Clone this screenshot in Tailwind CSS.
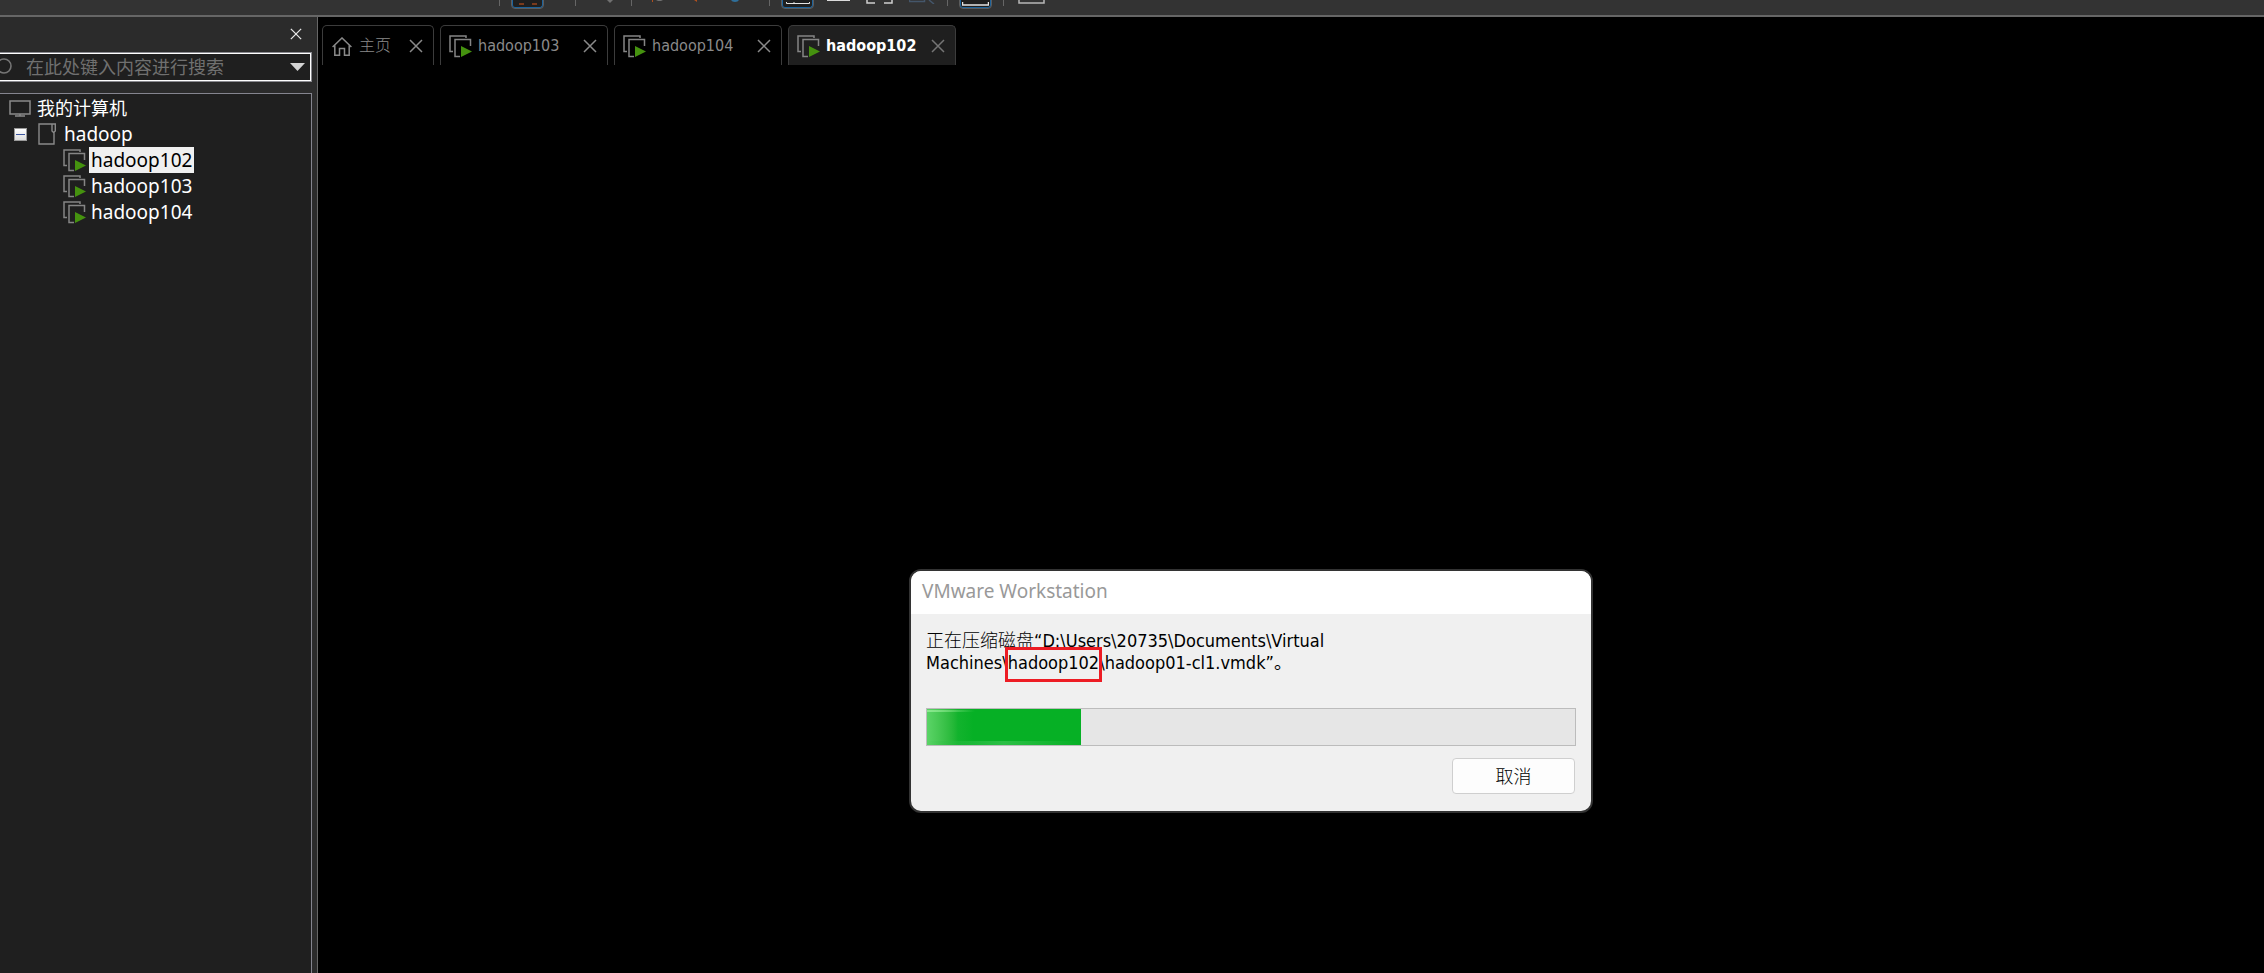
<!DOCTYPE html>
<html lang="zh-Hans">
<head>
  <meta charset="UTF-8" />
  <meta name="viewport" content="width=device-width, initial-scale=1.0" />
  <title>hadoop102 - VMware Workstation</title>
  <script src="https://cdn.jsdelivr.net/npm/@tailwindcss/browser@4"></script>
</head>
<body class="flex h-screen flex-col overflow-hidden bg-black font-['Noto_Sans','Noto_Sans_CJK_SC',sans-serif] text-white">

  <!-- 共用圖示 -->
  <svg class="hidden" xmlns="http://www.w3.org/2000/svg">
    <symbol id="icon-vm" viewBox="0 0 23 23">
      <path d="M4 16.5H1V1H17V3" fill="none" stroke="#858585" stroke-width="1.5" />
      <path d="M11 21.5H6V4.5H21.5V11" fill="none" stroke="#858585" stroke-width="1.5" />
      <path d="M12 11L23 16.5L12 22Z" fill="#45920f" />
    </symbol>
    <symbol id="icon-close" viewBox="0 0 14 14">
      <path d="M1 1L13 13M13 1L1 13" fill="none" stroke="currentColor" stroke-width="1.5" />
    </symbol>
  </svg>

  <!-- 工具列 -->
  <header class="flex h-[17px] shrink-0 items-start overflow-hidden border-b-2 border-[#666] bg-[#333] pl-[499px]">
    <span class="h-[6px] w-px bg-[#666]"></span>
    <button class="ml-[12px] h-[8px] w-[31px] rounded-b-[3px] border border-t-0 border-[#1c639c] bg-[#1f1f1f] outline outline-[#5c5c5c]" aria-label="挂起">
      <svg class="mx-auto block h-[2px] w-[18px]" viewBox="0 0 18 2"><path d="M0 0H5V2H0ZM13 0H18V2H13Z" fill="#7a3a1c" /></svg>
    </button>
    <span class="ml-[32px] h-[6px] w-px bg-[#666]"></span>
    <button class="ml-[31px] w-[6px]" aria-label="电源菜单">
      <svg class="block h-[3px] w-[6px]" viewBox="0 0 6 3"><path d="M0 0H6L3 3Z" fill="#707070" /></svg>
    </button>
    <span class="ml-[18px] h-[6px] w-px bg-[#666]"></span>
    <button class="ml-[20px] w-[12px]" aria-label="拍摄快照">
      <svg class="block h-[2px] w-[12px]" viewBox="0 0 12 2"><path d="M0 0H1V2H0Z" fill="#b0501f" /><path d="M4 0H11L9 1H6Z" fill="#707070" /></svg>
    </button>
    <button class="ml-[30px] w-[4px]" aria-label="恢复快照">
      <svg class="block h-[2px] w-[4px]" viewBox="0 0 4 2"><path d="M0 0H3V2Z" fill="#b0501f" /></svg>
    </button>
    <button class="ml-[33px] w-[8px]" aria-label="管理快照">
      <svg class="block h-[3px] w-[8px]" viewBox="0 0 8 3"><path d="M0 0H8Q7 2 4 2Q1 2 0 0Z" fill="#2f6f9a" /></svg>
    </button>
    <span class="ml-[30px] h-[6px] w-px bg-[#666]"></span>
    <button class="ml-[12px] h-[8px] w-[31px] rounded-b-[3px] border border-t-0 border-[#1c639c] bg-[#1f1f1f] outline outline-[#5c5c5c]" aria-label="显示库">
      <svg class="mx-auto block h-[3px] w-[24px]" viewBox="0 0 24 3"><path d="M.5 0V1.5H23.5V0M8 0V1.5" fill="none" stroke="#e4e4e4" /></svg>
    </button>
    <button class="ml-[14px] h-px w-[23px] bg-[#dcdcdc]" aria-label="显示缩略图"></button>
    <button class="ml-[16px] w-[27px]" aria-label="全屏">
      <svg class="block h-[4px] w-[27px]" viewBox="0 0 27 4"><path d="M1 0V3H9M18 3H26V0" fill="none" stroke="#cfcfcf" stroke-width="1.5" /></svg>
    </button>
    <button class="ml-[16px] w-[26px]" aria-label="Unity">
      <svg class="block h-[4px] w-[26px]" viewBox="0 0 26 4"><path d="M.5 0V1.5H15.5V0M20 0L25 4" fill="none" stroke="#44566a" stroke-width="1.5" /></svg>
    </button>
    <span class="ml-[12px] h-[6px] w-px bg-[#666]"></span>
    <button class="ml-[12px] h-[8px] w-[31px] rounded-b-[3px] border border-t-0 border-[#1c639c] bg-[#1f1f1f] outline outline-[#5c5c5c]" aria-label="控制台视图">
      <svg class="mx-auto block h-[4px] w-[27px]" viewBox="0 0 27 4"><path d="M.5 0V3H26.5V0" fill="none" stroke="#e4e4e4" stroke-width="1.5" /></svg>
    </button>
    <span class="ml-[12px] h-[6px] w-px bg-[#666]"></span>
    <button class="ml-[14px] w-[27px]" aria-label="拉伸客户机">
      <svg class="block h-[4px] w-[27px]" viewBox="0 0 27 4"><path d="M1 0V3H26V0" fill="none" stroke="#b8b8b8" stroke-width="1.5" /></svg>
    </button>
  </header>

  <div class="flex min-h-0 flex-1">

    <!-- 左側資料庫 -->
    <aside class="flex w-[318px] shrink-0 flex-col border-r border-[#666] bg-[#2b2b2b] pr-[5px]">
      <div class="flex h-[35px] items-center justify-end pr-[10px] pb-[2px]">
        <button class="text-[#e8e8e8]" aria-label="关闭库">
          <svg class="block size-3"><use href="#icon-close" /></svg>
        </button>
      </div>
      <div class="border border-l-0 border-[#8a8a90]">
        <div class="flex h-[28px] items-center border border-l-0 border-white bg-[#1f1f1f] text-[18px]">
          <svg class="h-[18px] w-[12px] shrink-0" viewBox="0 0 12 18" fill="none" stroke="#757575" stroke-width="1.6"><circle cx="4" cy="8" r="7" /></svg>
          <input type="text" class="ml-[14px] min-w-0 flex-1 bg-transparent leading-[26px] outline-none placeholder:text-[#707070]" placeholder="在此处键入内容进行搜索" aria-label="搜索" />
          <button class="mr-[5px]" aria-label="搜索选项">
            <svg class="block h-[8px] w-[15px]" viewBox="0 0 15 8"><path d="M0 0H15L7.5 8Z" fill="#d4d4d4" /></svg>
          </button>
        </div>
      </div>
      <nav class="mt-[11px] flex-1 border-t border-r border-[#85858f] bg-[#1f1f1f] pt-px text-[19px] leading-[26px]">
        <div class="flex h-[26px] items-center gap-[6px] pl-[9px] text-[18px]">
          <svg class="h-[17px] w-[22px]" viewBox="0 0 22 17" fill="none" stroke="#8a8a8a" stroke-width="1.5"><path d="M1 1H21V14H1ZM11 14V16M6 16H16" /></svg>
          <span>我的计算机</span>
        </div>
        <div class="flex h-[26px] items-center pl-[14px]">
          <button class="flex size-[13px] items-center justify-center border border-[#9a9a9a] bg-linear-to-b from-white to-[#dcdcdc]" aria-label="折叠 hadoop">
            <span class="h-px w-[9px] bg-[#3b55a0]"></span>
          </button>
          <svg class="ml-[11px] h-[22px] w-[18px]" viewBox="0 0 18 22" fill="none" stroke="#8a8a8a" stroke-width="1.4"><path d="M14 1H1V21H16V8.5M14 1H17.3V8L15.6 9.5L14 8Z" /></svg>
          <span class="ml-[8px]">hadoop</span>
        </div>
        <ul class="pl-[63px]">
          <li class="flex h-[26px] items-center gap-[3px]">
            <svg class="size-[23px]"><use href="#icon-vm" /></svg>
            <a href="#" class="bg-[#f0f0f0] px-[2px] text-black">hadoop102</a>
          </li>
          <li class="flex h-[26px] items-center gap-[3px]">
            <svg class="size-[23px]"><use href="#icon-vm" /></svg>
            <a href="#" class="px-[2px]">hadoop103</a>
          </li>
          <li class="flex h-[26px] items-center gap-[3px]">
            <svg class="size-[23px]"><use href="#icon-vm" /></svg>
            <a href="#" class="px-[2px]">hadoop104</a>
          </li>
        </ul>
      </nav>
    </aside>

    <!-- 虛擬機分頁 -->
    <main class="min-w-0 flex-1 pt-[8px] pl-[4px]">
      <div class="flex gap-[6px] font-['DejaVu_Sans_Condensed','Noto_Sans_CJK_SC',sans-serif] text-[16px] text-[#8a8a8a]" role="tablist">
        <div class="flex h-[40px] w-[112px] items-center rounded-t-[5px] border border-b-0 border-[#3c3c3c] pt-px pr-[10px] pl-[9px]">
          <svg class="h-[19px] w-[20px]" viewBox="0 0 20 19" fill="none" stroke="#8a8a8a" stroke-width="1.5"><path d="M.6 10L10 1L19.4 10M2.8 8.5V18.2H7.5V11.5H12.5V18.2H17.2V8.5" /></svg>
          <button class="ml-[7px] text-[16px] font-light" role="tab">主页</button>
          <button class="ml-auto" aria-label="关闭主页"><svg class="block size-[14px]"><use href="#icon-close" /></svg></button>
        </div>
        <div class="flex h-[40px] w-[168px] items-center rounded-t-[5px] border border-b-0 border-[#3c3c3c] pt-px pr-[10px] pl-[8px]">
          <svg class="size-[23px]"><use href="#icon-vm" /></svg>
          <button class="ml-[6px]" role="tab">hadoop103</button>
          <button class="ml-auto" aria-label="关闭 hadoop103"><svg class="block size-[14px]"><use href="#icon-close" /></svg></button>
        </div>
        <div class="flex h-[40px] w-[168px] items-center rounded-t-[5px] border border-b-0 border-[#3c3c3c] pt-px pr-[10px] pl-[8px]">
          <svg class="size-[23px]"><use href="#icon-vm" /></svg>
          <button class="ml-[6px]" role="tab">hadoop104</button>
          <button class="ml-auto" aria-label="关闭 hadoop104"><svg class="block size-[14px]"><use href="#icon-close" /></svg></button>
        </div>
        <div class="flex h-[40px] w-[168px] items-center rounded-t-[5px] border border-b-0 border-[#3c3c3c] bg-[#1f1f1f] pt-px pr-[10px] pl-[8px]">
          <svg class="size-[23px]"><use href="#icon-vm" /></svg>
          <button class="ml-[6px] font-bold text-white" role="tab" aria-selected="true">hadoop102</button>
          <button class="ml-auto text-[#757575]" aria-label="关闭 hadoop102"><svg class="block size-[14px]"><use href="#icon-close" /></svg></button>
        </div>
      </div>
    </main>
  </div>

  <!-- 壓縮進度對話框 -->
  <section class="absolute top-[569px] left-[909px] w-[684px] overflow-hidden rounded-[12px] border-2 border-[#333] bg-[#f0f0f0] text-black" role="dialog" aria-labelledby="dialogTitle">
    <h1 id="dialogTitle" class="h-[43px] bg-white pl-[11px] text-[19px] leading-[41px] text-[#999]">VMware Workstation</h1>
    <div class="px-[15px] pt-[16px] pb-[17px]">
      <p class="w-[420px] font-['DejaVu_Sans_Condensed','Noto_Sans_CJK_SC',sans-serif] text-[18px] leading-[22px]"><span class="font-light">正在压缩磁盘</span>“D:\Users\20735\Documents\Virtual Machines\<span class="relative">hadoop102<span class="absolute -inset-x-[3px] -top-[5px] h-[35px] border-3 border-[#ed1c24]"></span></span>\hadoop01-cl1.vmdk”。</p>
      <div class="mt-[34px] h-[38px] border border-[#bcbcbc] bg-[#e6e6e6]" role="progressbar" aria-valuenow="24" aria-valuemin="0" aria-valuemax="100" aria-label="压缩进度">
        <div class="flex h-full flex-col justify-between bg-linear-to-r from-[#5bd467] via-[#12b32d] via-20% to-[#06b025] to-30%" style="width: 23.8%">
          <div class="mt-px h-[2px] w-[48px] bg-linear-to-r from-[#8be98f] to-transparent"></div>
          <div class="h-[4px] bg-linear-to-r from-transparent via-[#2bbf45] to-transparent"></div>
        </div>
      </div>
      <div class="mt-[12px] flex justify-end pr-px">
        <button class="h-[36px] w-[123px] rounded-[4px] border border-[#cfcfcf] bg-[#fdfdfd] text-[18px] font-light">取消</button>
      </div>
    </div>
  </section>

</body>
</html>
